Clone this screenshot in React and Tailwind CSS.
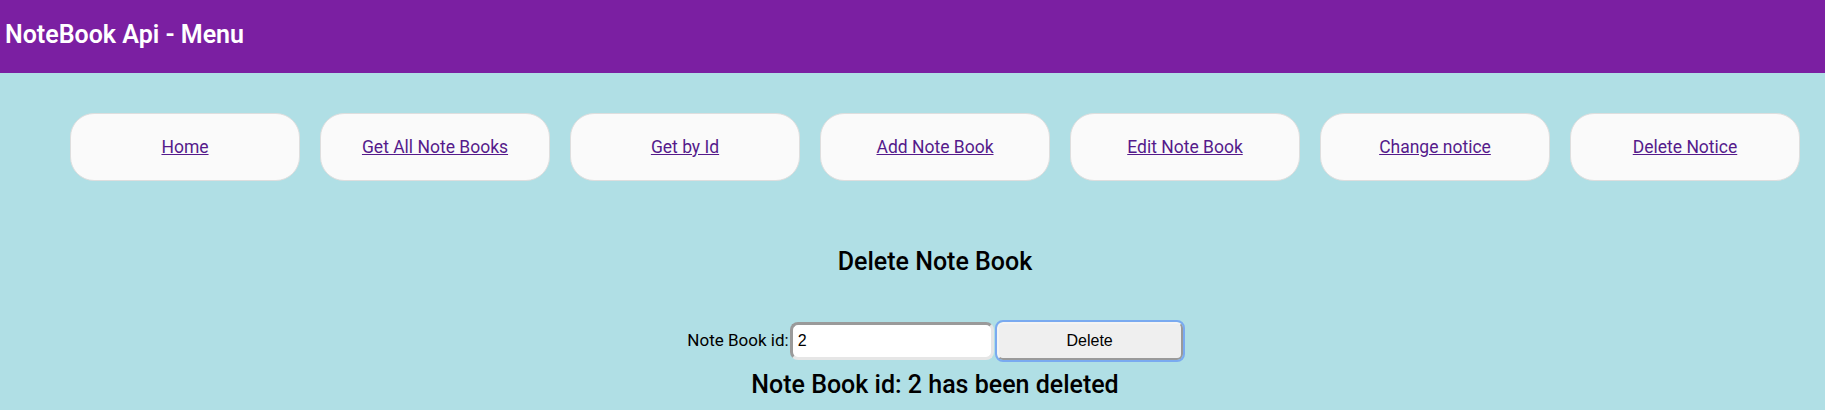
export default function App() {
  const links = [
    "Home",
    "Get All Note Books",
    "Get by Id",
    "Add Note Book",
    "Edit Note Book",
    "Change notice",
    "Delete Notice",
  ];

  return (
    <div className="min-h-[410px] w-full bg-[#b0dfe5] font-['Roboto',sans-serif] overflow-hidden">
      {/* Top bar */}
      <header className="h-[73px] bg-[#7b1fa2] pl-[5px] pt-[16px]">
        <h1 className="text-white text-[25px] font-semibold leading-normal">
          NoteBook Api - Menu
        </h1>
      </header>

      {/* Menu */}
      <nav className="flex gap-[20px] pl-[70px] pt-[40px]">
        {links.map((l) => (
          <div
            key={l}
            className="w-[230px] h-[68px] shrink-0 flex items-center justify-center bg-[#fafafa] border border-[#dedede] rounded-[24px]"
          >
            <a href="#" className="text-[17.5px] text-[#551a8b] underline">
              {l}
            </a>
          </div>
        ))}
      </nav>

      {/* Delete form */}
      <div className="flex flex-col items-center pl-[45px]">
        <h2 className="mt-[62px] text-[25px] font-medium leading-normal text-black">
          Delete Note Book
        </h2>

        <div className="mt-[41px] flex items-center">
          <label className="text-[17px] text-black mr-[1px]">Note Book id:</label>
          <input
            type="text"
            defaultValue="2"
            className="w-[204px] h-[38px] px-[5px] rounded-[8px] bg-white border-[3px] border-t-[#9a9a9a] border-l-[#9a9a9a] border-b-[#e6e6e6] border-r-[#e6e6e6] font-['Liberation_Sans',sans-serif] text-[16px] text-black outline-none"
          />
          <button
            type="button"
            className="ml-[3px] w-[186px] h-[38px] rounded-[6px] bg-[#efefef] border-2 border-t-[#f4f4f4] border-l-[#f4f4f4] border-b-[#9a9a9a] border-r-[#9a9a9a] outline-2 outline-solid outline-[#7aaaf0] font-['Liberation_Sans',sans-serif] text-[16px] text-black"
          >
            Delete
          </button>
        </div>

        <h2 className="mt-[6px] text-[25px] font-medium leading-normal text-black">
          Note Book id: 2 has been deleted
        </h2>
      </div>
    </div>
  );
}
